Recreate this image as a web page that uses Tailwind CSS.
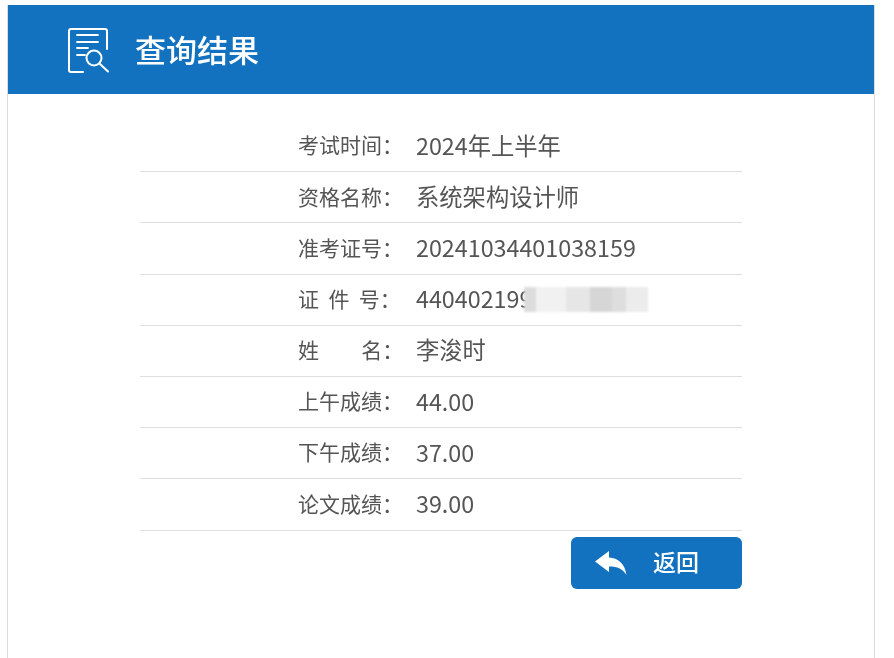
<!DOCTYPE html>
<html lang="zh-CN">
<head>
  <meta charset="UTF-8" />
  <title>查询结果</title>
  <script src="https://cdn.jsdelivr.net/npm/@tailwindcss/browser@4"></script>
</head>
<body class="bg-white h-[658px] overflow-hidden font-['Noto_Sans_CJK_SC','Noto_Sans',sans-serif] text-[#555]">
  <div class="pt-[5px] pl-2 w-[874px]">
    <div class="h-[653px] border-x border-[#dcdcdc] -mx-px blur-[0.35px]">
      <header class="h-[89px] bg-[#1272bf] flex items-center pl-[59px] gap-[26px] text-white">
        <svg class="w-[42px] h-[46px]" viewBox="0 0 42 46" fill="none" stroke="white" stroke-width="2" stroke-linecap="round" stroke-linejoin="round">
          <path d="M40 22V4a2 2 0 0 0-2-2H4a2 2 0 0 0-2 2v39a2 2 0 0 0 2 2h12" />
          <path d="M10 8h21M10 15h21M10 21h11M10 28h8" stroke-width="1.8" />
          <circle cx="27" cy="31" r="7.500" />
          <path d="M33 37l8 7.500" />
        </svg>
        <h1 class="text-[31px] font-medium leading-none -mt-[2px]">查询结果</h1>
      </header>
      <main class="w-[602px] ml-[132px] pt-[27px]">
        <dl class="text-[#555]">
          <div class="h-[51.2px] pb-[2px] border-b border-[#dedede] flex items-center">
            <dt class="w-[276px] pl-[158px] text-[21px] whitespace-pre">考试时间：</dt>
            <dd class="text-[23.3px]">2024年上半年</dd>
          </div>
          <div class="h-[51.2px] pb-[2px] border-b border-[#dedede] flex items-center">
            <dt class="w-[276px] pl-[158px] text-[21px] whitespace-pre">资格名称：</dt>
            <dd class="text-[23.3px]">系统架构设计师</dd>
          </div>
          <div class="h-[51.2px] pb-[2px] border-b border-[#dedede] flex items-center">
            <dt class="w-[276px] pl-[158px] text-[21px] whitespace-pre">准考证号：</dt>
            <dd class="text-[23.3px]">20241034401038159</dd>
          </div>
          <div class="relative h-[51.2px] pb-[2px] border-b border-[#dedede] flex items-center">
            <dt class="w-[276px] pl-[158px] text-[21px] whitespace-pre">证  件  号：</dt>
            <dd class="text-[23.3px]">440402199</dd>
            <!-- mosaic over the blurred id number -->
            <div class="absolute left-[384px] top-[12px] h-[25px] w-[124px] flex blur-[1px]">
              <span class="w-[12px] bg-[#dcdcdc]"></span>
              <span class="w-[30px] bg-[#f1f1f1]"></span>
              <span class="w-[24px] bg-[#e6e6e6]"></span>
              <span class="w-[22px] bg-[#d6d6d6]"></span>
              <span class="w-[14px] bg-[#dedede]"></span>
              <span class="w-[22px] bg-[#ececec]"></span>
            </div>
          </div>
          <div class="h-[51.2px] pb-[2px] border-b border-[#dedede] flex items-center">
            <dt class="w-[276px] pl-[158px] text-[21px] whitespace-pre">姓         名：</dt>
            <dd class="text-[23.3px]">李浚时</dd>
          </div>
          <div class="h-[51.2px] pb-[2px] border-b border-[#dedede] flex items-center">
            <dt class="w-[276px] pl-[158px] text-[21px] whitespace-pre">上午成绩：</dt>
            <dd class="text-[23.3px]">44.00</dd>
          </div>
          <div class="h-[51.2px] pb-[2px] border-b border-[#dedede] flex items-center">
            <dt class="w-[276px] pl-[158px] text-[21px] whitespace-pre">下午成绩：</dt>
            <dd class="text-[23.3px]">37.00</dd>
          </div>
          <div class="h-[51.2px] pb-[2px] border-b border-[#dedede] flex items-center">
            <dt class="w-[276px] pl-[158px] text-[21px] whitespace-pre">论文成绩：</dt>
            <dd class="text-[23.3px]">39.00</dd>
          </div>
        </dl>
        <div class="flex justify-end mt-[6px]">
          <button class="w-[171px] h-[52px] bg-[#1272bf] rounded-md text-white flex items-center pl-[24px] gap-[26px]">
            <svg class="w-[32px] h-[26px]" viewBox="0 0 32 26" fill="white">
              <path d="M0 11.500 14 1v6.500c9 .5 16 6 17.500 17.500-3.500-6-9-8.500-17.500-8.500V22Z" />
            </svg>
            <span class="text-[23px] font-medium leading-none -mt-[3px]">返回</span>
          </button>
        </div>
      </main>
    </div>
  </div>
</body>
</html>
